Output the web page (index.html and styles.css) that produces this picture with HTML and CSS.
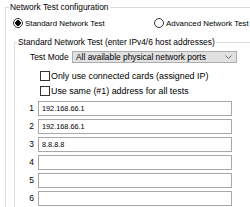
FILE: index.html
```html
<!DOCTYPE html>
<html lang="en">
<head>
    <meta charset="UTF-8">
    <title>Network Test configuration</title>
    <link rel="stylesheet" href="styles.css">
</head>
<body>
    <fieldset class="group outer">
        <legend>Network Test configuration</legend>
        <div class="mode-row">
            <label class="radio"><input type="radio" name="mode" checked> Standard Network Test</label>
            <label class="radio"><input type="radio" name="mode"> Advanced Network Test</label>
        </div>

        <fieldset class="group inner">
            <legend>Standard Network Test (enter IPv4/6 host addresses)</legend>
            <div class="test-mode">
                <span class="test-mode-label">Test Mode</span>
                <div class="combo">
                    <span>All available physical network ports</span>
                    <svg width="7" height="4" viewBox="0 0 7 4"><path d="M0.5 0.5 L3.5 3.5 L6.5 0.5" fill="none" stroke="#707070" stroke-width="1"/></svg>
                </div>
            </div>
            <div class="options">
                <label class="check"><input type="checkbox"> Only use connected cards (assigned IP)</label>
                <label class="check"><input type="checkbox"> Use same (#1) address for all tests</label>
            </div>
            <div class="hosts">
                <span class="num">1</span><input type="text" value="192.168.66.1">
                <span class="num">2</span><input type="text" value="192.168.66.1">
                <span class="num">3</span><input type="text" value="8.8.8.8">
                <span class="num">4</span><input type="text">
                <span class="num">5</span><input type="text">
                <span class="num">6</span><input type="text">
            </div>
        </fieldset>
    </fieldset>
</body>
</html>
```

FILE: styles.css
```css
body {
    margin: 0;
    background: #ffffff;
    color: #000000;
    font-family: "Liberation Sans", Arial, sans-serif;
    font-size: 8.4px;
    overflow: hidden;
}

.group {
    border: 1px solid #dcdcdc;
    border-right: none;
    border-bottom: none;
    min-width: 0;
}

.group legend {
    padding: 0 1px;
    line-height: 11px;
}

.outer {
    margin: 2px 0 0 5px;
    padding: 0 0 20px 3px;
}

.mode-row {
    display: grid;
    grid-template-columns: 141px auto;
    align-items: center;
    margin: 4px 0 0 4px;
    height: 12px;
}

.radio,
.check {
    display: flex;
    align-items: center;
    gap: 2px;
    white-space: nowrap;
}

.radio {
    font-size: 7.9px;
}

.radio input {
    appearance: none;
    margin: 0;
    width: 10px;
    height: 10px;
    border: 1px solid #333333;
    border-radius: 50%;
    background: #ffffff;
}

.radio input:checked {
    background: radial-gradient(circle, #000000 0 2.5px, #ffffff 3px);
}

.inner {
    margin: 8px 0 0 5px;
    padding: 0 0 20px 2px;
}

.test-mode {
    display: flex;
    align-items: center;
    margin: 3px 0 0 13px;
    height: 12px;
}

.test-mode-label {
    width: 42px;
}

.combo {
    display: flex;
    align-items: center;
    justify-content: space-between;
    box-sizing: border-box;
    width: 165px;
    height: 12px;
    padding: 0 4px 0 3px;
    background: #e1e1e1;
    border: 1px solid #adadad;
}

.options {
    margin: 5px 0 0 23px;
}

.check {
    height: 15px;
    gap: 1px;
    font-size: 8.9px;
}

.check input {
    appearance: none;
    margin: 0;
    width: 10px;
    height: 10px;
    border: 1px solid #333333;
    background: #ffffff;
}

.hosts {
    display: grid;
    grid-template-columns: 17px 194px;
    column-gap: 4px;
    row-gap: 3px;
    margin-top: 3px;
}

.num {
    text-align: right;
    line-height: 15px;
}

.hosts input {
    box-sizing: border-box;
    height: 15px;
    margin: 0;
    padding: 0 3px;
    border: 1px solid #a8a8a8;
    font: inherit;
    font-size: 7.3px;
    color: #000000;
    outline: none;
}
```
